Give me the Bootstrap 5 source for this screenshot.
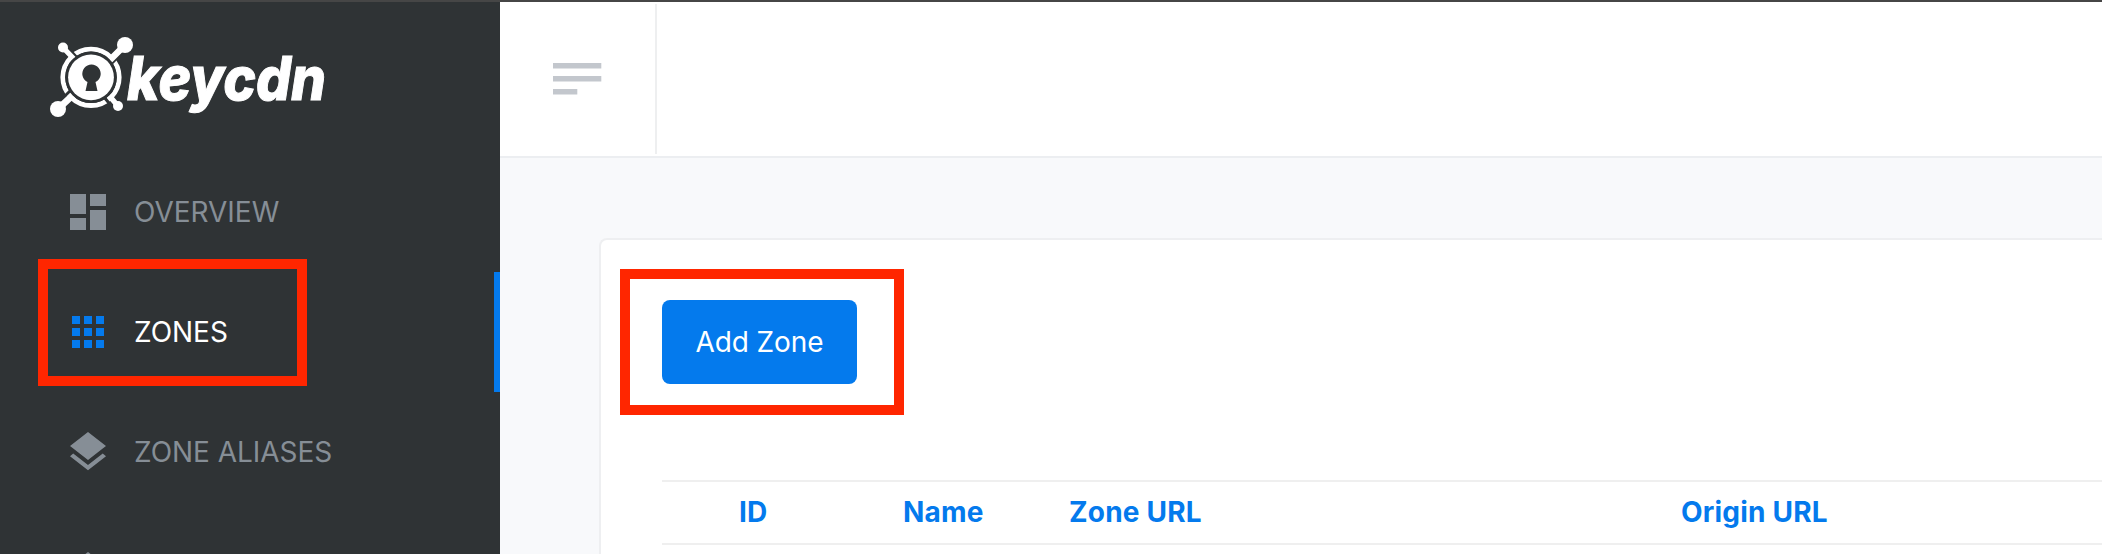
<!DOCTYPE html>
<html lang="en">
<head>
<meta charset="utf-8">
<meta name="viewport" content="width=device-width, initial-scale=1">
<title>KeyCDN – Zones</title>
<link href="https://cdn.jsdelivr.net/npm/bootstrap@5.3.0/dist/css/bootstrap.min.css" rel="stylesheet">
<style>
body{font-family:Inter,"Liberation Sans",sans-serif;font-size:28px;line-height:1.5;background:#f8f9fb;height:554px;border-top:2px solid #464646}
.side{width:500px;background:#2f3335}
.brand{padding:30px 0 0 46px;height:150px}
.brand svg{overflow:visible}
.side .nav-link{height:120px;padding:0 0 0 64px;color:#868e96;gap:22px;font-size:28px;position:relative}
.side .nav-link.active{color:#fff;box-shadow:inset -6px 0 #047aed}
.side .nav-link.active svg{color:#047aed}
.side .nav-link span{letter-spacing:-.03px}
.topbar{height:156px;background:#fff;border-bottom:2px solid #eceef1}
.toggler{width:157px;height:150px;margin-top:2px;border-right:2px solid #eeeff0;padding:0 0 0 53px}
.panel{margin:80px 0 0 99px;border:2px solid #eeeff1;border-right:0;border-bottom:0;border-radius:8px 0 0 0;padding:60px 0 0 61px}
.btn-zone{--bs-btn-bg:#047aed;--bs-btn-color:#fff;--bs-btn-border-width:0;--bs-btn-font-size:28px;--bs-btn-border-radius:8px;width:195px;height:84px;padding:0;letter-spacing:-.1px}
.zones{margin-top:96px;table-layout:fixed;width:1440px;font-size:28px;border-collapse:separate;border-spacing:0}
.zones th{color:#047aed;border:solid #efefef;border-width:2px 0;padding:0;height:65px;font-weight:700;line-height:61px;letter-spacing:.2px}
.mark-box{position:absolute;border:10px solid #ff2600;pointer-events:none}
</style>
</head>
<body class="d-flex overflow-hidden">
<aside class="side flex-shrink-0 overflow-hidden">
  <div class="brand">
    <svg width="290" height="92" viewBox="46 32 290 92" fill="#fff">
      <circle cx="91" cy="77.3" r="28.2" fill="none" stroke="#fff" stroke-width="4.8"/>
      <g stroke="#2f3335" stroke-width="3"><path d="M69 49l11 12M121 54l-13 13M104 97l9 11M60 101l13-13"/></g>
      <g stroke="#fff"><path stroke-width="5.2" d="M63 47.5l11 11.5M118 106l-9-10.5"/><path stroke-width="6.5" d="M125 45l-15 15M58 109l15-14"/></g>
      <circle cx="91" cy="77.3" r="25.8" fill="#2f3335"/><circle cx="91" cy="77.3" r="22.9"/>
      <circle cx="63" cy="47.5" r="5"/><circle cx="125" cy="45" r="8"/><circle cx="58" cy="109" r="8"/><circle cx="118" cy="106" r="5"/>
      <path fill="#2f3335" d="M85.500 91l2-9a9.200 9.200 0 1 1 8 0l2 9z"/>
      <text x="127" y="99.500" font-family="Inter,sans-serif" font-size="60" font-weight="800" font-style="italic" textLength="199" lengthAdjust="spacingAndGlyphs" stroke="#fff" stroke-width="1">keycdn</text>
    </svg>
  </div>
  <nav class="nav flex-column">
    <a class="nav-link d-flex align-items-center" href="#"><svg width="48" height="48" viewBox="0 0 24 24" fill="currentColor"><path d="M3 13h8V3H3v10zm0 8h8v-6H3v6zm10 0h8V11h-8v10zm0-18v6h8V3h-8z"/></svg><span>OVERVIEW</span></a>
    <a class="nav-link active d-flex align-items-center" href="#"><svg width="48" height="48" viewBox="0 0 24 24" fill="currentColor"><path d="M4 8h4V4H4v4zm6 12h4v-4h-4v4zm-6 0h4v-4H4v4zm0-6h4v-4H4v4zm6 0h4v-4h-4v4zm6-10v4h4V4h-4zm-6 4h4V4h-4v4zm6 6h4v-4h-4v4zm0 6h4v-4h-4v4z"/></svg><span>ZONES</span></a>
    <a class="nav-link d-flex align-items-center" href="#"><svg width="48" height="48" viewBox="0 0 24 24" fill="currentColor"><path d="M11.99 18.54l-7.37-5.73L3 14.07l9 7 9-7-1.63-1.27-7.38 5.74zM12 16l7.36-5.73L21 9l-9-7-9 7 1.63 1.27L12 16z"/></svg><span>ZONE ALIASES</span></a>
    <a class="nav-link d-flex align-items-center" href="#"><svg width="48" height="48" viewBox="0 0 24 24" fill="currentColor"><path d="M12 2l9 7-9 7-9-7z"/></svg></a>
  </nav>
</aside>
<main class="flex-grow-1 d-flex flex-column overflow-hidden">
  <header class="topbar flex-shrink-0">
    <div class="toggler d-flex align-items-center"><svg width="49" height="33" viewBox="0 0 49 33" fill="#c3c7cd"><path d="M0 0h48.300v5.500H0zM0 13h48.300v5.500H0zM0 26h24.300v5.500H0z"/></svg></div>
  </header>
  <section class="panel bg-white flex-grow-1">
    <button class="btn btn-zone d-block" type="button">Add Zone</button>
    <table class="zones">
      <colgroup><col style="width:77px"><col style="width:164px"><col style="width:166px"><col style="width:612px"><col></colgroup>
      <thead><tr><th></th><th>ID</th><th>Name</th><th>Zone URL</th><th>Origin URL</th></tr></thead>
    </table>
  </section>
</main>
<div class="mark-box" style="left:38px;top:259px;width:269px;height:127px"></div>
<div class="mark-box" style="left:620px;top:269px;width:284px;height:146px"></div>
<script src="https://cdn.jsdelivr.net/npm/bootstrap@5.3.0/dist/js/bootstrap.bundle.min.js"></script>
</body>
</html>
